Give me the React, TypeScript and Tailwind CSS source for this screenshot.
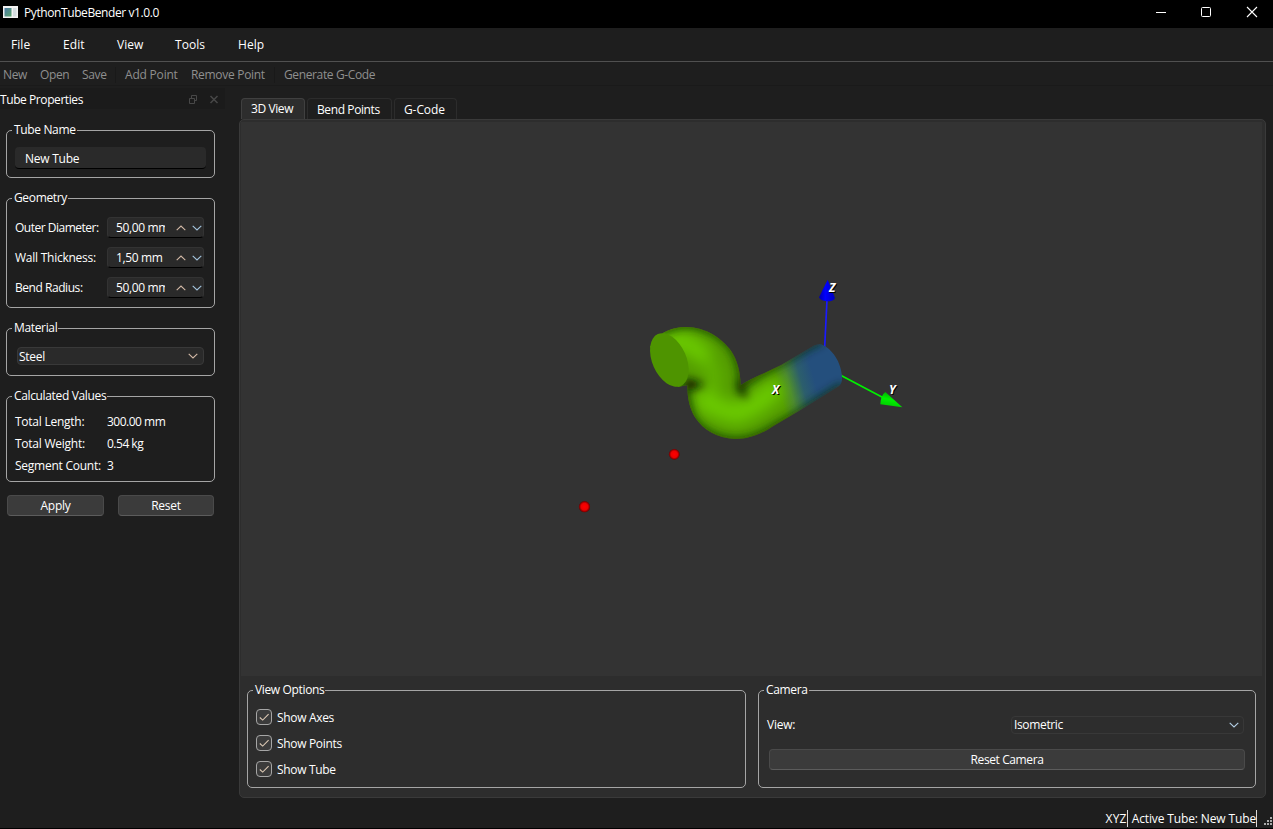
import React from "react";

type Kids = { children?: React.ReactNode };

function Group({ title, className = "", children }: Kids & { title: string; className?: string }) {
  return (
    <fieldset className={`min-w-0 rounded-[5px] border border-[#a5a5a5] ${className}`}>
      <legend className="ml-[5px] h-4 whitespace-nowrap pl-[2px] pr-px leading-4 tracking-[-0.35px]">{title}</legend>
      {children}
    </fieldset>
  );
}

function Chevron({ up = false, tone = "#d3b9a6" }: { up?: boolean; tone?: string }) {
  return (
    <svg width="10" height="6" viewBox="0 0 10 6" fill="none" stroke={tone} strokeWidth="1.1" className="shrink-0">
      <path d={up ? "M0.7 5.2L5 1L9.3 5.2" : "M0.7 0.8L5 5L9.3 0.8"} />
    </svg>
  );
}

function SpinRow({ label, value, fit = "" }: { label: string; value: string; fit?: string }) {
  return (
    <div className="flex h-[21px] items-center">
      <span className={`w-[92px] whitespace-nowrap ${fit}`}>{label}</span>
      <div className="flex h-[21px] w-[97px] items-center rounded-[4px] border border-b-black border-[#333333] bg-[#2a2a2a]">
        <span className="ml-[8px] w-[49px] overflow-hidden whitespace-nowrap tracking-[-0.35px]">{value}</span>
        <span className="ml-[11px] flex gap-[6px]">
          <Chevron up />
          <Chevron tone="#a3c3dc" />
        </span>
      </div>
    </div>
  );
}

function ValueRow({ label, value }: { label: string; value: string }) {
  return (
    <div className="flex h-[22px] items-center whitespace-nowrap">
      <span className="w-[92px]">{label}</span>
      <span className="tracking-[-0.5px]">{value}</span>
    </div>
  );
}

function Button({ className = "", children }: Kids & { className?: string }) {
  return (
    <button className={`flex h-[21px] items-center justify-center rounded-[4px] border border-[#4a4a4a] border-b-[#5c5c5c] bg-[#3b3b3b] ${className}`}>
      {children}
    </button>
  );
}

function Check({ label }: { label: string }) {
  return (
    <label className="flex h-[26px] items-center gap-[5px] tracking-[-0.32px]">
      <svg width="16" height="16" viewBox="0 0 16 16" fill="none">
        <rect x="0.5" y="0.5" width="15" height="15" rx="3.5" fill="#3b3b3b" stroke="#a6a6a6" />
        <path d="M3.8 8.5L6.7 11.1L12.6 5.2" stroke="#dcc9b4" strokeWidth="1.1" />
      </svg>
      <span className="pt-[2px]">{label}</span>
    </label>
  );
}

const TUBE =
  "M70 188C95 176 115 171 138 171C200 172 245 205 272 241C292 270 301 305 302 346C325 331 345 322 365 313L425 284L515 231C525 225 533 222 543 223C568 232 601 265 606 318C607 332 604 342 597 348L480 421L400 468C360 495 325 507 285 507C230 505 190 480 165 442C149 415 142 385 142 345L115 351L30 230Z";

function Scene() {
  return (
    <svg width="1021" height="554" viewBox="241 122 1021 554" fontFamily="'Open Sans','Noto Sans',sans-serif">
      <defs>
        <clipPath id="tubeClip"><path d={TUBE} /></clipPath>
        <filter id="wide" filterUnits="userSpaceOnUse" x="-100" y="50" width="850" height="600"><feGaussianBlur stdDeviation="22" /></filter>
        <filter id="soft" filterUnits="userSpaceOnUse" x="-100" y="50" width="850" height="600"><feGaussianBlur stdDeviation="12" /></filter>
        <linearGradient id="tubeFill" gradientUnits="userSpaceOnUse" x1="418" y1="365" x2="525" y2="335">
          <stop offset="0" stopColor="#539c00" />
          <stop offset="0.3" stopColor="#4c8a30" />
          <stop offset="0.65" stopColor="#2c5e6c" />
          <stop offset="1" stopColor="#244f7d" />
        </linearGradient>
        <radialGradient id="ball">
          <stop offset="0" stopColor="#ff0000" />
          <stop offset="0.6" stopColor="#ec0000" />
          <stop offset="1" stopColor="#650000" />
        </radialGradient>
        <linearGradient id="coneZ"><stop offset="0" stopColor="#0000a8" /><stop offset="0.4" stopColor="#0000ff" /><stop offset="1" stopColor="#0000b8" /></linearGradient>
        <linearGradient id="coneY" x1="0.6" y1="0" x2="0.3" y2="1"><stop offset="0" stopColor="#00a000" /><stop offset="0.5" stopColor="#00f000" /><stop offset="1" stopColor="#00c800" /></linearGradient>
      </defs>
      <g transform="translate(640 270) scale(0.33333)">
        <path d="M561 90L554 232" stroke="#1a1aff" strokeWidth="5" />
        <path d="M563 29L537 82Q540 93 561 94Q582 94 585 84Z" fill="url(#coneZ)" />
        <path d="M602 316L730 383" stroke="#00f000" strokeWidth="5" />
        <path d="M787 412L736 366Q722 376 721 403Z" fill="url(#coneY)" />
        <path d={TUBE} fill="url(#tubeFill)" />
        <g clipPath="url(#tubeClip)" fill="none">
          <g filter="url(#wide)" stroke="#6ccc00" strokeLinecap="round" strokeLinejoin="round">
            <path strokeWidth="56" d="M85 215L135 215L185 250" />
            <path strokeWidth="34" strokeOpacity="0.6" d="M185 250L225 310L215 385" />
            <path strokeWidth="60" d="M190 392L225 412L290 432L345 405L400 362" />
          </g>
          <g filter="url(#soft)" stroke="#152c04" strokeOpacity="0.75">
            <path strokeWidth="24" d="M60 182C95 166 115 161 138 161C200 162 253 199 280 235C300 268 309 305 306 346C325 331 345 318 365 305L425 276L515 223L545 211" />
            <path strokeWidth="28" d="M610 349L480 431L400 478C360 505 325 517 285 517C230 515 180 488 155 450C139 415 132 385 134 345" />
          </g>
          <g filter="url(#soft)">
            <path d="M290 328L305 345L325 388L303 372Z" fill="#081000" />
            <path d="M136 322L152 329L196 343L150 360L136 356Z" fill="#0c1800" />
          </g>
        </g>
        <ellipse cx="88" cy="270" rx="51" ry="85" transform="rotate(-24 88 270)" fill="#4e9400" />
      </g>
      <circle cx="674.3" cy="454.3" r="5.4" fill="url(#ball)" />
      <circle cx="584.5" cy="506.7" r="5.6" fill="url(#ball)" />
      <g fontSize="12" fontWeight="700" fontStyle="italic">
        <g fill="#000000" transform="translate(1 1)">
          <text x="829" y="292">Z</text><text x="889" y="394">Y</text><text x="772" y="394">X</text>
        </g>
        <g fill="#ffffff">
          <text x="829" y="292">Z</text><text x="889" y="394">Y</text><text x="772" y="394">X</text>
        </g>
      </g>
    </svg>
  );
}

function TitleBar() {
  return (
    <header className="flex h-[28px] shrink-0 items-start bg-black">
      <svg width="15" height="12" viewBox="0 0 15 12" className="ml-[3px] mt-[6px]">
        <defs><linearGradient id="app" x2="1" y2="1"><stop stopColor="#4b79a5" /><stop offset="1" stopColor="#5aa66c" /></linearGradient></defs>
        <rect width="15" height="12" fill="#f2f2f2" />
        <rect x="1.5" y="2" width="7" height="8.5" fill="url(#app)" />
        <rect x="10" y="2" width="3.5" height="8.5" fill="#d5dde0" />
      </svg>
      <span className="ml-[6px] mt-[4px] leading-[18px] tracking-[-0.41px]">PythonTubeBender v1.0.0</span>
      <svg width="120" height="28" viewBox="0 0 120 28" fill="none" stroke="#ffffff" className="ml-auto">
        <path d="M3 12.5H13" />
        <rect x="48.5" y="7.5" width="9" height="9" rx="1" />
        <path d="M94 7L104 17M104 7L94 17" strokeWidth="1.1" />
      </svg>
    </header>
  );
}

export default function App() {
  return (
    <div className="flex h-[829px] w-[1273px] flex-col overflow-hidden border-b border-black bg-[#1e1e1e] font-['Open_Sans','Noto_Sans',sans-serif] text-[12px] leading-4 tracking-[-0.25px] text-white">
      <TitleBar />
      <nav className="flex h-[34px] shrink-0 items-center border-b border-[#505050] pl-[11px] tracking-[0.06px]">
        <span className="w-[52px]">File</span>
        <span className="w-[54px]">Edit</span>
        <span className="w-[58px]">View</span>
        <span className="w-[63px]">Tools</span>
        <span>Help</span>
      </nav>
      <div className="flex h-[24px] shrink-0 items-center whitespace-nowrap border-b border-[#1a1a1a] pl-[3px] pt-[2px] text-[#8f8f8f]">
        <span className="w-[37px] tracking-[-0.4px]">New</span>
        <span className="w-[42px] tracking-[-0.4px]">Open</span>
        <span className="w-[33px] tracking-[-0.35px]">Save</span>
        <span className="mr-[9px] h-4 w-px bg-[#191919]" />
        <span className="w-[66px] tracking-[-0.2px]">Add Point</span>
        <span className="w-[83px] tracking-[-0.3px]">Remove Point</span>
        <span className="mr-[9px] h-4 w-px bg-[#191919]" />
        <span className="tracking-[-0.37px]">Generate G-Code</span>
      </div>

      <main className="flex h-[712px] shrink-0">
        <aside className="flex w-[239px] flex-col pt-[2px]">
          <div className="flex h-[21px] w-[225px] items-center bg-[#1b1b1b] pt-[2px]">
            <span className="flex-1 tracking-[-0.42px]">Tube Properties</span>
            <svg width="30" height="9" viewBox="0 0 30 9" fill="none" stroke="#484848" className="mr-[6px]">
              <path d="M0.5 3.5H5.5V8.5H0.5ZM2.5 3V0.5H7.5V5.5H6" />
              <path d="M21.5 1L28.5 8M28.5 1L21.5 8" strokeWidth="1.5" />
            </svg>
          </div>
          <div className="ml-[6px] mt-[13px] flex w-[209px] flex-col gap-[12px]">
            <Group title="Tube Name" className="h-[56px]">
              <div className="mx-2 mt-[9px] flex h-[22px] items-center rounded-[4px] border-b border-black bg-[#2a2a2a] pl-[10px] pt-[2px]">New Tube</div>
            </Group>
            <Group title="Geometry" className="h-[118px]">
              <div className="ml-2 mt-[11px] flex flex-col gap-[9px]">
                <SpinRow label="Outer Diameter:" value="50,00 mm" fit="tracking-[-0.5px]" />
                <SpinRow label="Wall Thickness:" value="1,50 mm" />
                <SpinRow label="Bend Radius:" value="50,00 mm" fit="tracking-[-0.45px]" />
              </div>
            </Group>
            <Group title="Material" className="h-[56px]">
              <div className="mx-[10px] mt-[11px] flex h-[18px] items-center justify-between rounded-[4px] border border-[#393939] bg-[#2a2a2a] pl-px pr-[5px]">
                <span className="pt-[2px]">Steel</span>
                <Chevron />
              </div>
            </Group>
            <Group title="Calculated Values" className="h-[94px]">
              <div className="ml-2 mt-[7px]">
                <ValueRow label="Total Length:" value="300.00 mm" />
                <ValueRow label="Total Weight:" value="0.54 kg" />
                <ValueRow label="Segment Count:" value="3" />
              </div>
            </Group>
            <div className="mt-[1px] flex gap-[14px] pl-px">
              <Button className="w-[97px]">Apply</Button>
              <Button className="w-[96px]">Reset</Button>
            </div>
          </div>
        </aside>

        <section className="flex w-[1027px] flex-col pt-[12px]">
          <div className="flex h-[21px] items-end gap-[2px] pl-[2px]">
            <div className="flex h-[21px] w-[64px] items-center rounded-t-[4px] border border-b-0 border-[#404040] bg-[#2d2d2d] pl-[9px] tracking-[-0.4px]">3D View</div>
            <div className="flex h-[21px] w-[85px] items-center rounded-t-[4px] border border-b-0 border-[#2c2c2c] pl-[9px] pt-[2px] tracking-[-0.4px]">Bend Points</div>
            <div className="flex h-[21px] w-[63px] items-center rounded-t-[4px] border border-b-0 border-[#2c2c2c] pl-[9px] pt-[2px] tracking-[-0.1px]">G-Code</div>
          </div>
          <div className="flex h-[679px] flex-col rounded-[5px] border border-[#3a3a3a] bg-[#2d2d2d]">
            <div className="ml-px mt-[2px] h-[554px] w-[1021px] bg-[#333333]">
              <Scene />
            </div>
            <div className="mt-[6px] flex gap-[12px] pl-[7px]">
              <Group title="View Options" className="h-[106px] w-[499px]">
                <div className="ml-2 mt-[6px]">
                  <Check label="Show Axes" />
                  <Check label="Show Points" />
                  <Check label="Show Tube" />
                </div>
              </Group>
              <Group title="Camera" className="h-[106px] w-[498px]">
                <div className="ml-2 mr-[11px] mt-[18px] flex h-[18px] items-center justify-between">
                  <span>View:</span>
                  <div className="flex h-[18px] w-[233px] items-center justify-between rounded-[4px] border border-[#383838] pl-[2px] pr-[4px]">
                    <span className="tracking-[-0.35px]">Isometric</span>
                    <Chevron tone="#b4cfe6" />
                  </div>
                </div>
                <Button className="ml-[10px] mt-[15px] w-[476px] tracking-[-0.4px]">Reset Camera</Button>
              </Group>
            </div>
          </div>
        </section>
      </main>

      <footer className="flex flex-1 items-center justify-end pt-[10px]">
        <span className="flex h-[17px] items-center border-r border-[#d8d8d8] pt-[2px] tracking-[0.2px]">XYZ</span>
        <span className="ml-[4px] flex h-[17px] items-center border-r border-[#d8d8d8] pt-[2px] tracking-[-0.13px]">Active Tube: New Tube</span>
        <svg width="8" height="8" viewBox="0 0 8 8" fill="#a9a9a9" className="ml-[7px] mr-px mt-[6px]">
          <path d="M6 0h2v2h-2zM3 3h2v2h-2zM6 3h2v2h-2zM0 6h2v2h-2zM3 6h2v2h-2zM6 6h2v2h-2z" />
        </svg>
      </footer>
    </div>
  );
}
